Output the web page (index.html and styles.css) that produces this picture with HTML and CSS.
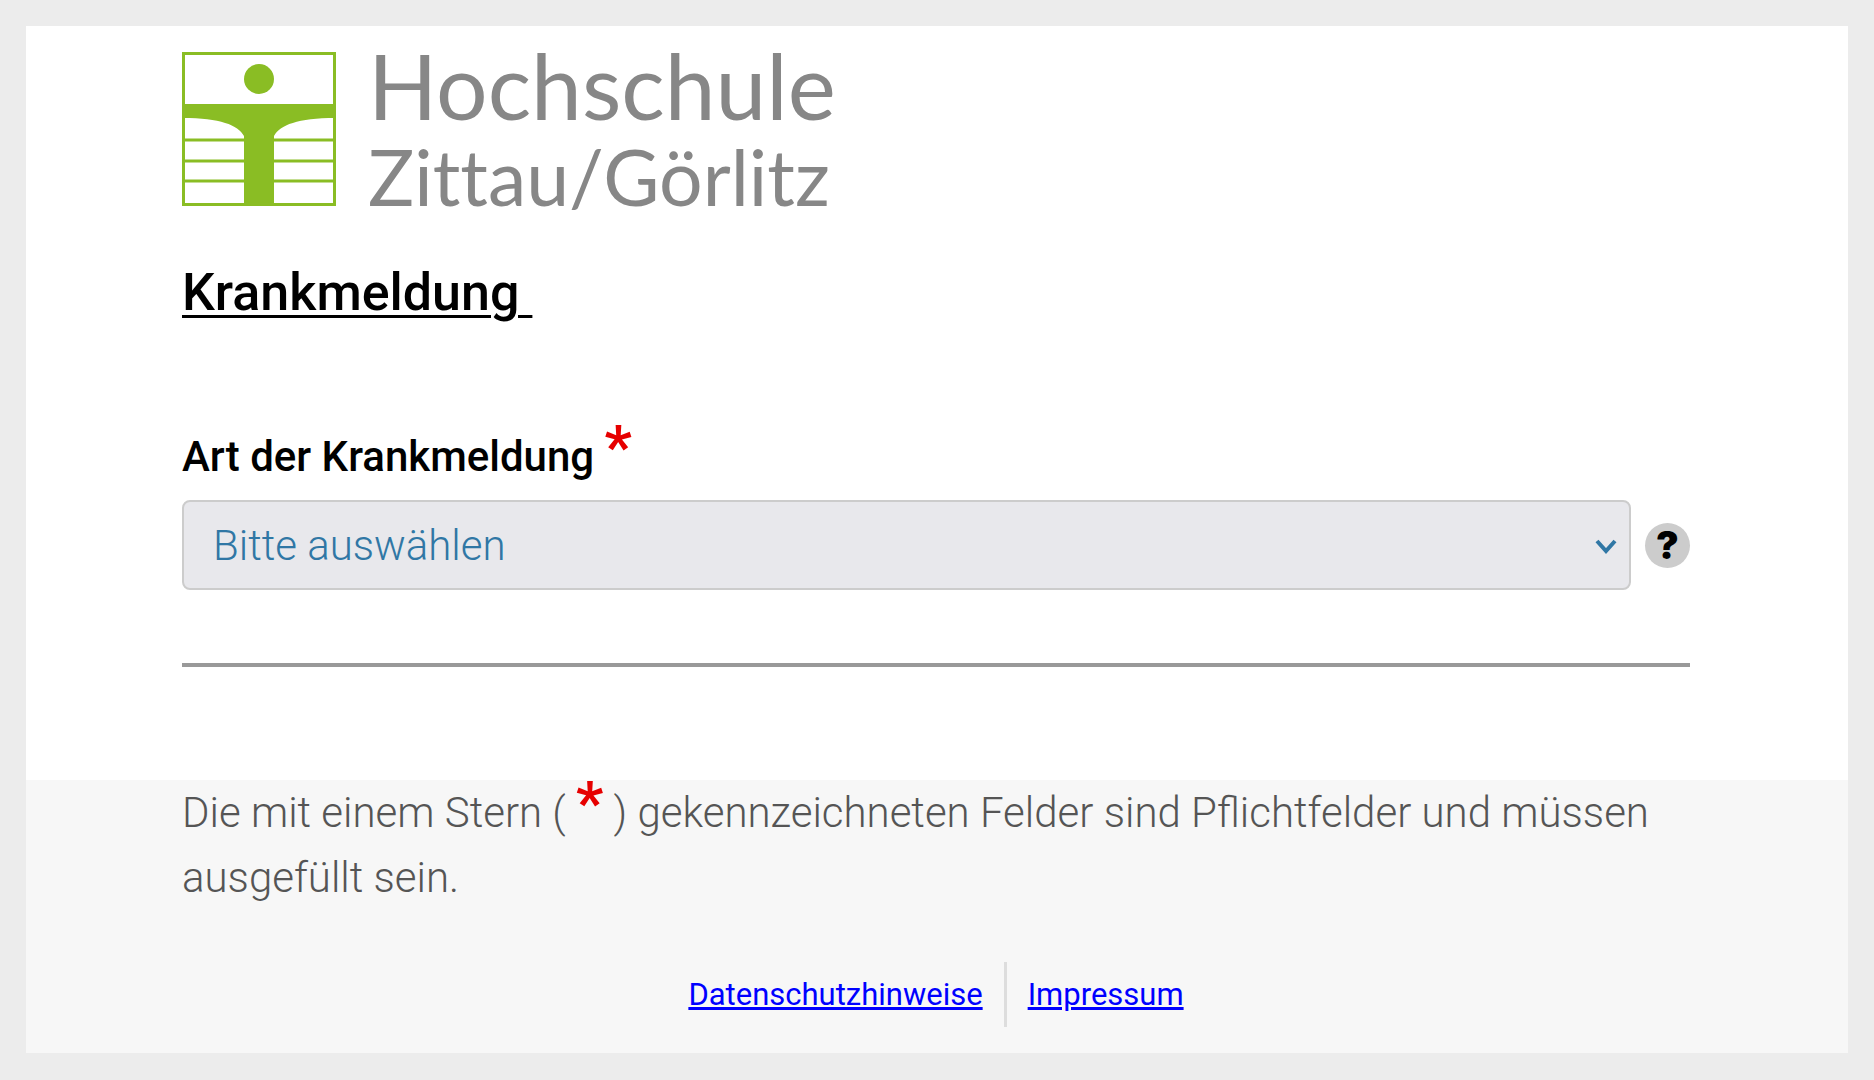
FILE: index.html
```html
<!DOCTYPE html>
<html lang="de">
<head>
	<meta charset="utf-8">
	<meta name="viewport" content="width=device-width, initial-scale=1">
	<title>Krankmeldung</title>
	<link rel="stylesheet" href="styles.css">
</head>
<body>

	<div class="page">
		<main class="content">
			<div class="logo">
				<svg class="logo_sign" viewBox="0 0 154 154" aria-hidden="true">
					<path d="M1 88H152M1 109H152M1 129H152" fill="none" stroke="#8abd24" stroke-width="3"/>
					<rect x="1.5" y="1.5" width="151" height="151" fill="none" stroke="#8abd24" stroke-width="3"/>
					<circle cx="77" cy="27" r="15"/>
					<path d="M1 52H153V66C116 66 98 73 92 84V153H62V84C56 73 38 66 1 66Z"/>
				</svg>
				<div class="logo_text">
					<span class="logo_name">Hochschule</span>
					<span class="logo_place">Zittau/Görlitz</span>
				</div>
			</div>

			<h1 class="title">Krankmeldung&nbsp;</h1>

			<form class="form">
				<label class="label" for="art">Art der Krankmeldung <span class="star">*</span></label>
				<div class="field">
					<div class="select_box">
						<select class="select" id="art" name="art" required>
							<option value="">Bitte auswählen</option>
						</select>
						<svg class="arrow" viewBox="0 0 22 16" aria-hidden="true"><path d="M2 2L11 12L20 2"/></svg>
					</div>
					<button class="help" type="button" aria-label="Hilfe">?</button>
				</div>
			</form>
			<hr class="line">
		</main>

		<footer class="footer">
			<p class="note">Die mit einem Stern ( <span class="star">*</span> ) gekennzeichneten Felder sind Pflichtfelder und müssen ausgefüllt sein.</p>
			<nav class="links">
				<a class="link" href="#">Datenschutzhinweise</a>
				<a class="link" href="#">Impressum</a>
			</nav>
		</footer>
	</div>

</body>
</html>
```
FILE: styles.css
```css
*{margin:0;padding:0;box-sizing:border-box;}
body{padding:26px;background:#ececec;font-family:Roboto,"Liberation Sans",sans-serif;font-size:42px;line-height:65px;color:#000;}

.page{background:#fff;}
.content{padding:26px 158px 113px 156px;}

/* logo */
.logo{display:flex;gap:32px;}
.logo_sign{width:154px;height:154px;flex:none;fill:#8abd24;}
.logo_text{display:flex;flex-direction:column;gap:29px;font-family:Lato,"Open Sans",sans-serif;font-variant-ligatures:none;color:#878787;white-space:nowrap;}
.logo_name{font-size:91px;line-height:65px;}
.logo_place{font-size:77px;line-height:60px;}

.title{margin-top:48px;font-size:52px;line-height:78px;font-weight:500;text-decoration:underline;text-decoration-thickness:3px;text-underline-offset:5px;}

/* form */
.form{margin-top:92px;}
.label{display:block;font-weight:500;}
.star{font-weight:700;font-size:60px;line-height:0;vertical-align:4px;color:#e60000;}
.field{display:flex;align-items:center;gap:14px;margin-top:11px;}
.select_box{position:relative;flex:1;}
.select{display:block;width:100%;height:90px;padding:0 60px 0 29px;appearance:none;border:2px solid #ccc;border-radius:8px;background:#e8e8ec;color:#3077a5;font:300 42px Roboto,sans-serif;}
.arrow{position:absolute;right:14px;top:39px;width:22px;height:16px;fill:none;stroke:#3077a5;stroke-width:4;pointer-events:none;}
.help{width:45px;height:45px;border:none;border-radius:50%;background:#ccc;color:#000;font:900 38px/45px Inter,sans-serif;text-align:center;}
.line{margin-top:73px;height:4px;border:none;background:#999;}

/* footer */
.footer{padding:0 158px 26px 156px;background:#f7f7f7;}
.note{font-weight:300;color:#555;}
.links{display:flex;justify-content:center;margin-top:52px;}
.link{padding:0 21px;font-size:31px;color:#00f;}
.link + .link{border-left:3px solid #ddd;}
```
